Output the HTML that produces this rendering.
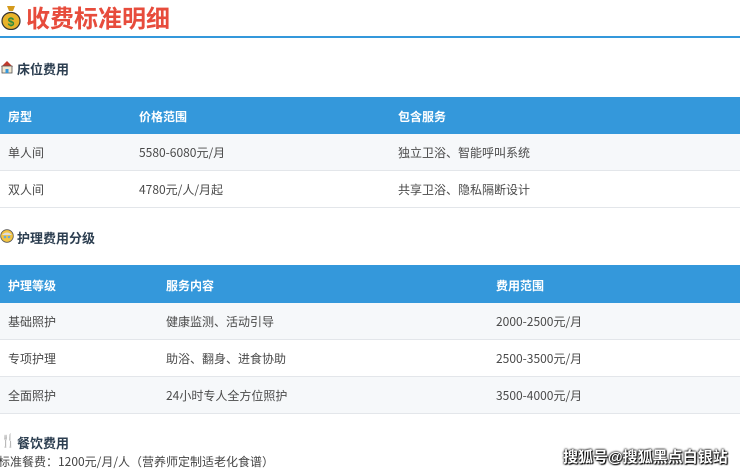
<!DOCTYPE html>
<html><head><meta charset="utf-8"><style>
*{margin:0;padding:0;box-sizing:border-box}
body{width:740px;height:471px;overflow:hidden;background:#fff;font-family:"Liberation Sans","Noto Sans CJK SC",sans-serif;color:#333;position:relative}
.a{position:absolute;white-space:nowrap}
.title{left:26px;top:1px;font-size:24px;font-weight:bold;color:#e74c3c;font-family:"Noto Sans CJK SC",sans-serif;line-height:32px}
.line{left:0;top:36px;width:740px;height:2px;background:#3498db}
.h{font-size:13px;font-weight:bold;color:#2c3e50}
.th{background:#3498db;left:0;width:740px}
.th span{position:absolute;color:#fff;font-weight:bold;font-size:12px}
.tr{left:0;width:740px;border-bottom:1px solid #e3e6ea}
.tr span{position:absolute;font-size:12px;color:#4a4a4a;font-family:"Noto Sans CJK SC",sans-serif;line-height:16px}
.g{background:#f6f8fa}
</style></head><body>
<svg class="a" style="left:1px;top:4px" width="20" height="26" viewBox="0 0 20 26"><path d="M6 2h8l-2 5h-4z" fill="#d49a1c"/><ellipse cx="10" cy="17" rx="9" ry="8.5" fill="#e8b32a" stroke="#333" stroke-width="1.2"/><text x="10" y="22" font-size="12" font-weight="bold" fill="#2b8a3e" text-anchor="middle" font-family="Liberation Sans">$</text></svg>
<div class="a title">收费标准明细</div>
<div class="a line"></div>

<svg class="a" style="left:0;top:60px" width="14" height="14" viewBox="0 0 14 14"><path d="M1 7L7 1l6 6" fill="#c0392b"/><rect x="2" y="6" width="10" height="7" fill="#f0e6d0" stroke="#555" stroke-width=".8"/><rect x="5.5" y="9" width="3" height="4" fill="#3498db"/></svg>
<div class="a h" style="left:17px;top:59px">床位费用</div>

<div class="a th" style="top:97px;height:37px"><span style="left:8px;top:11px">房型</span><span style="left:139px;top:11px">价格范围</span><span style="left:398px;top:11px">包含服务</span></div>
<div class="a tr g" style="top:134px;height:37px"><span style="left:8px;top:11px">单人间</span><span style="left:139px;top:11px">5580-6080元/月</span><span style="left:398px;top:11px">独立卫浴、智能呼叫系统</span></div>
<div class="a tr" style="top:171px;height:37px"><span style="left:8px;top:11px">双人间</span><span style="left:139px;top:11px">4780元/人/月起</span><span style="left:398px;top:11px">共享卫浴、隐私隔断设计</span></div>

<svg class="a" style="left:0;top:229px" width="14" height="14" viewBox="0 0 14 14"><circle cx="7" cy="7" r="6.3" fill="#f4c542" stroke="#555" stroke-width=".8"/><path d="M2 6q5-5 10 0" fill="#ddd"/><circle cx="5" cy="8" r="1.3" fill="#6aa9d8"/><circle cx="9" cy="8" r="1.3" fill="#6aa9d8"/></svg>
<div class="a h" style="left:17px;top:228px">护理费用分级</div>

<div class="a th" style="top:265px;height:38px"><span style="left:8px;top:12px">护理等级</span><span style="left:166px;top:12px">服务内容</span><span style="left:496px;top:12px">费用范围</span></div>
<div class="a tr g" style="top:303px;height:37px"><span style="left:8px;top:11px">基础照护</span><span style="left:166px;top:11px">健康监测、活动引导</span><span style="left:496px;top:11px">2000-2500元/月</span></div>
<div class="a tr" style="top:340px;height:37px"><span style="left:8px;top:11px">专项护理</span><span style="left:166px;top:11px">助浴、翻身、进食协助</span><span style="left:496px;top:11px">2500-3500元/月</span></div>
<div class="a tr g" style="top:377px;height:37px"><span style="left:8px;top:11px">全面照护</span><span style="left:166px;top:11px">24小时专人全方位照护</span><span style="left:496px;top:11px">3500-4000元/月</span></div>

<div class="a h" style="left:0;top:433px">🍴</div>
<div class="a h" style="left:17px;top:433px">餐饮费用</div>
<div class="a" style="left:-2px;top:454px;font-size:12px;color:#444;font-family:'Noto Sans CJK SC',sans-serif;line-height:16px">标准餐费：1200元/月/人（营养师定制适老化食谱）</div>
<div class="a" style="left:563px;top:446px;font-size:15px;color:#fff;font-weight:bold;text-shadow:0 0 2px #000,0 0 2px #000,1px 1px 1px #000">搜狐号@搜狐黑点白银站</div>
</body></html>
